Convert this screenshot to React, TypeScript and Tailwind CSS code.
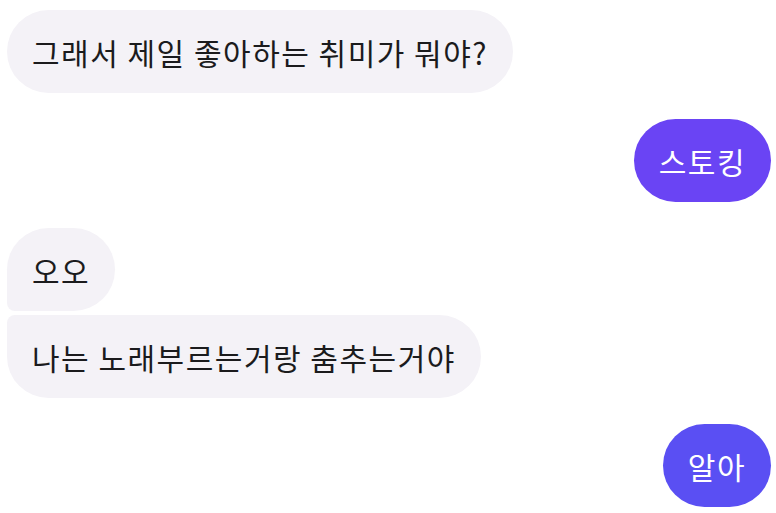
const font = { fontFamily: '"Noto Sans CJK KR", "Noto Sans", sans-serif' }

type Msg = { text: string; mine: boolean; shape: string; tone?: string }

const messages: Msg[][] = [
  [{ text: '그래서 제일 좋아하는 취미가 뭐야?', mine: false, shape: 'rounded-[42px]' }],
  [{ text: '스토킹', mine: true, shape: 'rounded-[42px]', tone: 'bg-[#6a44f4]' }],
  [
    { text: '오오', mine: false, shape: 'rounded-[42px] rounded-bl-[8px]' },
    { text: '나는 노래부르는거랑 춤추는거야', mine: false, shape: 'rounded-[42px] rounded-tl-[8px]' },
  ],
  [{ text: '알아', mine: true, shape: 'rounded-[42px]', tone: 'bg-[#5a4ff3]' }],
]

function Bubble({ msg }: { msg: Msg }) {
  return (
    <div className={msg.mine ? 'flex justify-end' : 'flex justify-start'}>
      <div
        className={`flex h-[83px] items-center px-[25px] text-[30px] leading-none tracking-[1.5px] ${msg.shape} ${
          msg.mine ? `${msg.tone} text-white` : 'bg-[#f4f2f7] text-[#1b1b1d]'
        }`}
      >
        {msg.text}
      </div>
    </div>
  )
}

export default function App() {
  return (
    <div className="flex min-h-[513px] w-[776px] flex-col gap-[26px] bg-white pl-[7px] pr-[5px] pt-[10px]" style={font}>
      {messages.map((group, i) => (
        <div key={i} className="flex flex-col gap-[4px]">
          {group.map((m, j) => (
            <Bubble key={j} msg={m} />
          ))}
        </div>
      ))}
    </div>
  )
}
